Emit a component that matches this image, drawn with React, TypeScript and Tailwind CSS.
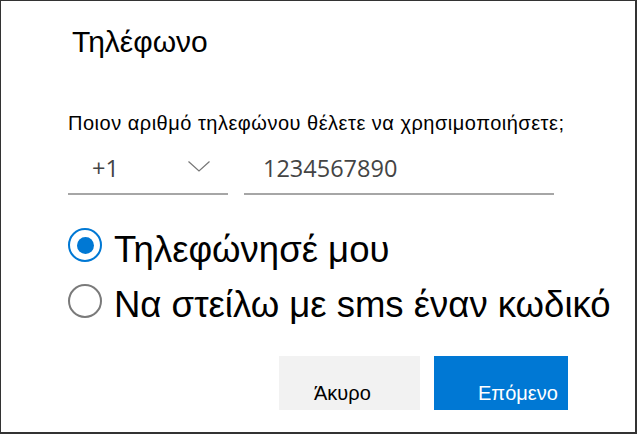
import { useState } from 'react';

type Choice = 'call' | 'sms';

const options: { id: Choice; label: string }[] = [
    { id: 'call', label: 'Τηλεφώνησέ μου' },
    { id: 'sms', label: 'Να στείλω με sms έναν κωδικό' },
];

function Radio({ checked }: { checked: boolean }) {
    return (
        <span
            className={
                checked
                    ? 'flex items-center justify-center w-[34px] h-[34px] rounded-full border-2 border-[#0078d4] shrink-0'
                    : 'flex items-center justify-center w-[34px] h-[34px] rounded-full border-2 border-[#7a7a7a] shrink-0'
            }
        >
            {checked && <span className="block w-[17px] h-[17px] rounded-full bg-[#0078d4]" />}
        </span>
    );
}

export default function App() {
    const [choice, setChoice] = useState<Choice>('call');

    return (
        <div className="w-[638px] h-[434px] bg-white">
            <div className="w-[637px] h-[434px] border-t border-l border-r-2 border-b-2 border-[#333] flex flex-col pl-[67px] pt-[23px] font-['Liberation_Sans',Arial,sans-serif] text-black">
                <h1 className="pl-[4px] text-[30px] leading-[36px] font-normal">Τηλέφωνο</h1>

                <p className="mt-[51px] text-[20px] leading-[24px] tracking-[0.5px] whitespace-nowrap">
                    Ποιον αριθμό τηλεφώνου θέλετε να χρησιμοποιήσετε;
                </p>

                <div className="mt-[18px] flex gap-[16px] font-['Open_Sans',sans-serif] text-[23.5px] leading-[30px] text-[#444]">
                    <div className="w-[160px] flex items-center justify-between pl-[24px] pr-[18px] pb-[10px] border-b-2 border-[#a6a6a6]">
                        <span>+1</span>
                        <svg width="22" height="11" viewBox="0 0 22 11" className="mt-[-4px]">
                            <polyline points="0.5,0.5 11,10 21.5,0.5" fill="none" stroke="#777" strokeWidth="1.2" />
                        </svg>
                    </div>
                    <div className="w-[310px] pl-[19px] pb-[10px] border-b-2 border-[#a6a6a6]">1234567890</div>
                </div>

                <div className="mt-[33px] flex flex-col gap-[11px]">
                    {options.map((o, i) => (
                        <label
                            key={o.id}
                            className="flex items-start gap-[12px] cursor-pointer"
                            onClick={() => setChoice(o.id)}
                        >
                            <span className={i === 0 ? 'mt-[0px]' : 'mt-[1px]'}>
                                <Radio checked={choice === o.id} />
                            </span>
                            <span className="text-[36.5px] leading-[44px] whitespace-nowrap">{o.label}</span>
                        </label>
                    ))}
                </div>

                <div className="mt-[29px] flex justify-end gap-[14px] pr-[67px] text-[20px] leading-[24px]">
                    <button className="w-[141px] h-[54px] bg-[#f2f2f2] text-left pl-[35px] pt-[19px] self-start">
                        Άκυρο
                    </button>
                    <button className="w-[134px] h-[54px] bg-[#0078d4] text-white text-left pl-[44px] pt-[19px] self-start">
                        Επόμενο
                    </button>
                </div>
            </div>
        </div>
    );
}
